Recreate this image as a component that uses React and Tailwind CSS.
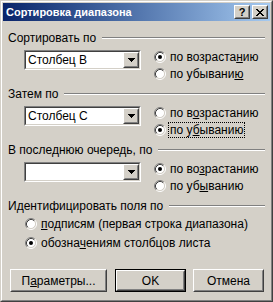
import React from 'react';

// classic win9x/2000 style sort dialog

function Arrow() {
  return (
    <svg width="7" height="4" viewBox="0 0 7 4" shapeRendering="crispEdges">
      <rect x="0" y="0" width="7" height="1" fill="#000" />
      <rect x="1" y="1" width="5" height="1" fill="#000" />
      <rect x="2" y="2" width="3" height="1" fill="#000" />
      <rect x="3" y="3" width="1" height="1" fill="#000" />
    </svg>
  );
}

function CloseGlyph() {
  const rows = [
    [0, 1, 6, 7],
    [1, 2, 5, 6],
    [2, 3, 4, 5],
    [3, 4],
    [2, 3, 4, 5],
    [1, 2, 5, 6],
    [0, 1, 6, 7],
  ];
  return (
    <svg width="8" height="7" viewBox="0 0 8 7" shapeRendering="crispEdges">
      {rows.map((cols, y) =>
        cols.map((x) => <rect key={`${x}-${y}`} x={x} y={y} width="1" height="1" fill="#000" />)
      )}
    </svg>
  );
}

function Raised({ className = '', children }) {
  return (
    <div className={`border border-t-white border-l-white border-r-[#404040] border-b-[#404040] ${className}`}>
      <div className="h-full w-full border border-t-[#D4D0C8] border-l-[#D4D0C8] border-r-[#808080] border-b-[#808080] flex items-center justify-center">
        {children}
      </div>
    </div>
  );
}

function Radio({ checked }) {
  return (
    <svg width="12" height="12" viewBox="0 0 12 12" className="shrink-0">
      <circle cx="6" cy="6" r="4.5" fill="#fff" />
      <path d="M2.11 9.89 A5.5 5.5 0 0 1 9.89 2.11" stroke="#808080" fill="none" />
      <path d="M9.89 2.11 A5.5 5.5 0 0 1 2.11 9.89" stroke="#fff" fill="none" />
      <path d="M2.82 9.18 A4.5 4.5 0 0 1 9.18 2.82" stroke="#404040" fill="none" />
      <path d="M9.18 2.82 A4.5 4.5 0 0 1 2.82 9.18" stroke="#D4D0C8" fill="none" />
      {checked && <circle cx="6" cy="6" r="2" fill="#000" />}
    </svg>
  );
}

function RadioRow({ checked, focus, children, className = '' }) {
  return (
    <div className={`flex items-center ${className}`}>
      <Radio checked={checked} />
      <span
        className={`ml-[2px] border px-px leading-[14px] whitespace-nowrap ${focus ? 'border-dotted border-black' : 'border-transparent'}`}
      >
        {children}
      </span>
    </div>
  );
}

function Combo({ value }) {
  return (
    <div className="w-[117px] h-[20px] border border-t-[#808080] border-l-[#808080] border-r-white border-b-white">
      <div className="h-full border border-t-[#404040] border-l-[#404040] border-r-[#D4D0C8] border-b-[#D4D0C8] bg-white flex items-center">
        <span className="flex-1 pl-[2px]">{value}</span>
        <Raised className="w-[16px] h-[16px] bg-[#D4D0C8]">
          <Arrow />
        </Raised>
      </div>
    </div>
  );
}

function GroupLabel({ children }) {
  return (
    <div className="flex items-center h-[13px]">
      <span className="whitespace-nowrap">{children}</span>
      <div className="flex-1 ml-[6px] border-t border-t-[#808080] border-b border-b-white" />
    </div>
  );
}

function SortGroup({ label, value, asc, desc, checked, focus }) {
  return (
    <div className="h-[56px] flex flex-col">
      <GroupLabel>{label}</GroupLabel>
      <div className="flex items-start mt-[4px]">
        <div className="ml-[16px] mt-[2px]">
          <Combo value={value} />
        </div>
        <div className="ml-[13px] flex flex-col">
          <RadioRow checked={checked === 'asc'} className="h-[17px]">{asc}</RadioRow>
          <RadioRow checked={checked === 'desc'} focus={focus} className="h-[17px]">{desc}</RadioRow>
        </div>
      </div>
    </div>
  );
}

function Btn({ w, isDefault, children }) {
  const btn = (
    <Raised className="h-full w-full bg-[#D4D0C8]">
      <span>{children}</span>
    </Raised>
  );
  return (
    <div className={`${w} h-[23px] ${isDefault ? 'border border-black' : ''}`}>{btn}</div>
  );
}

const U = ({ children }) => <span className="underline">{children}</span>;

export default function App() {
  return (
    <div className="w-[273px] h-[302px] bg-[#D4D0C8] text-[12px] leading-[14px] text-black font-['Liberation_Sans',Arial,sans-serif] border border-t-[#D4D0C8] border-l-[#D4D0C8] border-r-[#404040] border-b-[#404040]">
      <div className="h-full border border-t-white border-l-white border-r-[#808080] border-b-[#808080] p-px flex flex-col">
        {/* caption */}
        <div className="h-[18px] shrink-0 bg-gradient-to-r from-[#0A246A] to-[#A6CAF0] flex items-center pl-[3px] pr-[2px]">
          <span className="text-white font-bold text-[11px]">Сортировка диапазона</span>
          <div className="ml-auto flex gap-[2px]">
            <Raised className="w-[16px] h-[14px] bg-[#D4D0C8]">
              <span className="font-bold text-[11px] leading-[11px]">?</span>
            </Raised>
            <Raised className="w-[16px] h-[14px] bg-[#D4D0C8]">
              <CloseGlyph />
            </Raised>
          </div>
        </div>

        <div className="pl-[5px] pr-[5px] pt-[10px] flex flex-col">
          <SortGroup
            label="Сортировать по"
            value="Столбец B"
            asc={<>по возраста<U>н</U>ию</>}
            desc={<>по убывани<U>ю</U></>}
            checked="asc"
          />
          <SortGroup
            label="Затем по"
            value="Столбец C"
            asc={<>по в<U>о</U>зрастанию</>}
            desc={<>по у<U>б</U>ыванию</>}
            checked="desc"
            focus
          />
          <SortGroup
            label="В последнюю очередь, по"
            value=""
            asc={<>по во<U>з</U>растанию</>}
            desc={<>по уб<U>ы</U>ванию</>}
            checked="asc"
          />
          <div className="flex flex-col">
            <GroupLabel>Идентифицировать поля по</GroupLabel>
            <div className="mt-[2px] ml-[17px] flex flex-col">
              <RadioRow className="h-[19px]"><U>п</U>одписям (первая строка диапазона)</RadioRow>
              <RadioRow checked className="h-[19px]">обозна<U>ч</U>ениям столбцов листа</RadioRow>
            </div>
          </div>
        </div>

        <div className="mt-[17px] pl-[7px] flex">
          <Btn w="w-[97px]">П<U>а</U>раметры...</Btn>
          <div className="ml-[8px]">
            <Btn w="w-[71px]" isDefault>OK</Btn>
          </div>
          <div className="ml-[7px]">
            <Btn w="w-[71px]">Отмена</Btn>
          </div>
        </div>
      </div>
    </div>
  );
}
